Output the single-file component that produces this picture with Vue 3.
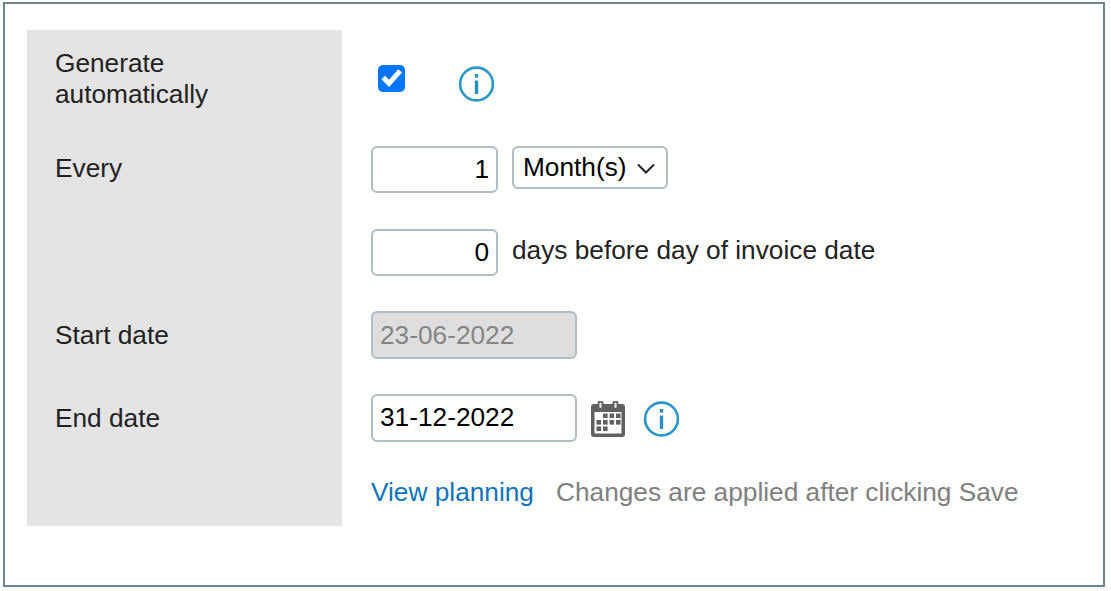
<template>
  <div class="panel">
    <div class="form">
      <!-- 自动生成 -->
      <div class="row row-first">
        <div class="label">Generate<br />automatically</div>
        <div class="value">
          <label class="check-wrap">
            <input v-model="auto" type="checkbox" class="check" />
            <svg v-if="auto" class="tick" viewBox="0 0 27 27">
              <path d="M5.2 12.5l5.8 5.8L22.2 5.8" fill="none" stroke="#fff" stroke-width="5" />
            </svg>
          </label>
          <svg class="info info-first" viewBox="0 0 36 36">
            <circle cx="18" cy="18" r="16.4" fill="none" stroke="#2b97c6" stroke-width="2.6" />
            <rect x="16.3" y="14.5" width="3.4" height="13.5" fill="#2b8fbf" />
            <rect x="16.3" y="8" width="3.4" height="3.6" fill="#2b8fbf" />
          </svg>
        </div>
      </div>
      <div class="row">
        <div class="label label-input">Every</div>
        <div class="value top">
          <input v-model="every" class="field num" type="text" />
          <div class="unit-wrap">
            <select v-model="unit" class="unit">
              <option>Month(s)</option>
              <option>Week(s)</option>
              <option>Year(s)</option>
            </select>
            <svg class="chevron" viewBox="0 0 18 11">
              <path d="M1 1.5l8 8 8-8" fill="none" stroke="#222" stroke-width="2" />
            </svg>
          </div>
        </div>
      </div>
      <div class="row">
        <div class="label"></div>
        <div class="value">
          <input v-model="days" class="field num" type="text" />
          <span class="after">days before day of invoice date</span>
        </div>
      </div>
      <div class="row">
        <div class="label label-date">Start date</div>
        <div class="value">
          <input v-model="startDate" class="field date" type="text" disabled />
        </div>
      </div>
      <div class="row">
        <div class="label label-date">End date</div>
        <div class="value">
          <input v-model="endDate" class="field date" type="text" />
          <svg class="calendar" viewBox="0 0 34 36">
            <path
              fill="#616161"
              d="M3 3h3.5V2.5a3 3 0 0 1 6 0V3h9V2.5a3 3 0 0 1 6 0V3H31a3 3 0 0 1 3 3v27a3 3 0 0 1-3 3H3a3 3 0 0 1-3-3V6a3 3 0 0 1 3-3z"
            />
            <rect x="8.4" y="1.5" width="2.2" height="5.5" rx="1.1" fill="#e8e8e8" />
            <rect x="23.4" y="1.5" width="2.2" height="5.5" rx="1.1" fill="#e8e8e8" />
            <rect x="3.5" y="11" width="27" height="21.5" fill="#fff" />
            <g fill="#616161">
              <rect v-for="c in calendarCells" :key="c.x + '-' + c.y" :x="c.x" :y="c.y" width="4.6" height="4.6" />
            </g>
          </svg>
          <svg class="info" viewBox="0 0 36 36">
            <circle cx="18" cy="18" r="16.4" fill="none" stroke="#2b97c6" stroke-width="2.6" />
            <rect x="16.3" y="14.5" width="3.4" height="13.5" fill="#2b8fbf" />
            <rect x="16.3" y="8" width="3.4" height="3.6" fill="#2b8fbf" />
          </svg>
        </div>
      </div>
      <div class="row row-last">
        <div class="label"></div>
        <div class="value value-last">
          <a class="link" href="#" @click.prevent>View planning</a>
          <span class="hint">Changes are applied after clicking Save</span>
        </div>
      </div>
    </div>
  </div>
</template>

<script setup>
import { ref } from 'vue'

const auto = ref(true)
const every = ref('1')
const unit = ref('Month(s)')
const days = ref('0')
const startDate = ref('23-06-2022')
const endDate = ref('31-12-2022')

// 日历图标的小方格
const calendarCells = [
  { x: 12, y: 12.5 }, { x: 18.5, y: 12.5 }, { x: 25, y: 12.5 },
  { x: 5.5, y: 19 }, { x: 12, y: 19 }, { x: 18.5, y: 19 }, { x: 25, y: 19 },
  { x: 5.5, y: 25.5 }, { x: 12, y: 25.5 }
]
</script>

<style>
html,
body {
  margin: 0;
  background: #fff;
}
</style>

<style scoped>
.panel {
  box-sizing: border-box;
  width: 1102px;
  height: 585px;
  margin: 2px 0 0 3px;
  padding: 26px 22px 0;
  border: 2px solid #6b8593;
  font-family: "Liberation Sans", Arial, sans-serif;
  font-size: 26.25px;
  color: #222;
}

.row {
  display: grid;
  grid-template-columns: 315px 1fr;
  height: 82.5px;
}
.row-first {
  height: 116px;
}
.row-last {
  height: 50px;
}

.label {
  box-sizing: border-box;
  padding-left: 28px;
  background: #e4e4e4;
  line-height: 31px;
}
.row-first .label {
  padding-top: 18px;
}
.label-input {
  padding-top: 7px;
}
.label-date {
  padding-top: 9px;
}

.value {
  display: flex;
  align-items: flex-start;
  padding-left: 29px;
}
.value-last {
  padding-top: 1px;
}

.check-wrap {
  position: relative;
  flex: none;
  width: 27px;
  height: 27px;
  margin: 35px 0 0 7px;
}
.check {
  display: block;
  width: 27px;
  height: 27px;
  margin: 0;
  border-radius: 5px;
  background: #0075ff;
  appearance: none;
}
.tick {
  position: absolute;
  left: 0;
  top: 0;
  width: 27px;
  height: 27px;
  pointer-events: none;
}

.info {
  flex: none;
  width: 37px;
  height: 36px;
  margin: 7px 0 0 18px;
}
.info-first {
  margin: 36px 0 0 53px;
}

.field {
  box-sizing: border-box;
  height: 47px;
  padding: 0 7px;
  border: 2px solid #b1bdc6;
  border-radius: 6px;
  background: #fff;
  font: inherit;
  color: #000;
  outline: none;
}
.num {
  width: 127px;
  text-align: right;
}
.date {
  width: 206px;
  height: 48px;
}
.field:disabled {
  background: #dedede;
  color: #858585;
}

.unit-wrap {
  position: relative;
  margin-left: 14px;
}
.unit {
  display: block;
  box-sizing: border-box;
  width: 156px;
  height: 43px;
  padding: 0 0 2px 9px;
  border: 2px solid #b1bdc6;
  border-radius: 6px;
  background: #fff;
  font: inherit;
  color: #000;
  appearance: none;
}
.chevron {
  position: absolute;
  left: 125px;
  top: 17px;
  width: 18px;
  height: 11px;
  pointer-events: none;
}

.after {
  margin-left: 14px;
  line-height: 43px;
}

.calendar {
  flex: none;
  width: 34px;
  height: 36px;
  margin: 7px 0 0 14px;
}

.link {
  color: #0f73b9;
  text-decoration: none;
  line-height: 31px;
}
.hint {
  margin-left: 22px;
  color: #808080;
  line-height: 31px;
}
</style>
